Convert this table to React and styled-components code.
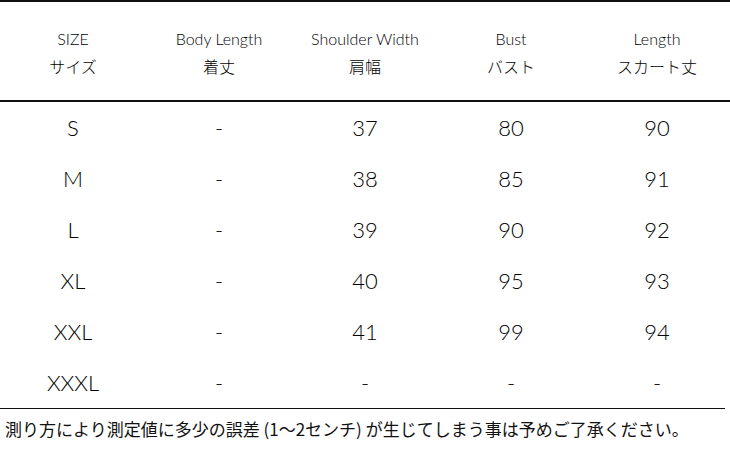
import React from "react";
import styled, { createGlobalStyle } from "styled-components";

const Global = createGlobalStyle`
  html, body { margin: 0; padding: 0; background: #fff; }
  body { width: 730px; height: 450px; overflow: hidden; }
`;

const Page = styled.div`
  width: 730px;
  height: 450px;
  background: #fff;
  color: #111;
  font-family: "Lato", "Noto Sans CJK JP", sans-serif;
  display: flex;
  flex-direction: column;
`;

const Table = styled.div`
  display: grid;
  grid-template-columns: repeat(5, 146px);
  border-top: 2px solid #111;
`;

const HeaderCell = styled.div`
  height: 100px;
  border-bottom: 2px solid #111;
  display: flex;
  flex-direction: column;
  align-items: center;
  justify-content: center;
  gap: 5px;
  padding-top: 2px;
  box-sizing: border-box;
`;

const En = styled.div`
  font-family: "Lato", "Liberation Sans", sans-serif;
  font-weight: 300;
  font-size: 16px;
  line-height: 22px;
  color: #000;
`;

const Ja = styled.div`
  font-family: "Noto Sans CJK JP", sans-serif;
  font-weight: 300;
  font-size: 16px;
  line-height: 22px;
  color: #000;
`;

const Cell = styled.div`
  height: 51px;
  display: flex;
  align-items: center;
  justify-content: center;
  font-family: "Lato", "Liberation Sans", sans-serif;
  font-weight: 300;
  font-size: 22px;
  color: #000;
  padding-bottom: 1px;
  box-sizing: border-box;
`;

const Footer = styled.div`
  width: 725px;
  border-top: 1.5px solid #111;
  padding: 9px 0 0 5px;
  box-sizing: border-box;
  font-family: "Noto Sans CJK JP", sans-serif;
  font-size: 17px;
  line-height: 22px;
  color: #111;
  white-space: nowrap;
`;

const headers = [
  ["SIZE", "サイズ"],
  ["Body Length", "着丈"],
  ["Shoulder Width", "肩幅"],
  ["Bust", "バスト"],
  ["Length", "スカート丈"],
];

const rows = [
  ["S", "-", "37", "80", "90"],
  ["M", "-", "38", "85", "91"],
  ["L", "-", "39", "90", "92"],
  ["XL", "-", "40", "95", "93"],
  ["XXL", "-", "41", "99", "94"],
  ["XXXL", "-", "-", "-", "-"],
];

export default function App() {
  return (
    <>
      <Global />
      <Page>
        <Table>
          {headers.map(([en, ja]) => (
            <HeaderCell key={en}>
              <En>{en}</En>
              <Ja>{ja}</Ja>
            </HeaderCell>
          ))}
          {rows.map((r) =>
            r.map((v, i) => (
              <Cell key={r[0] + i}>{v}</Cell>
            ))
          )}
        </Table>
        <Footer>測り方により測定値に多少の誤差 (1〜2センチ) が生じてしまう事は予めご了承ください。</Footer>
      </Page>
    </>
  );
}
